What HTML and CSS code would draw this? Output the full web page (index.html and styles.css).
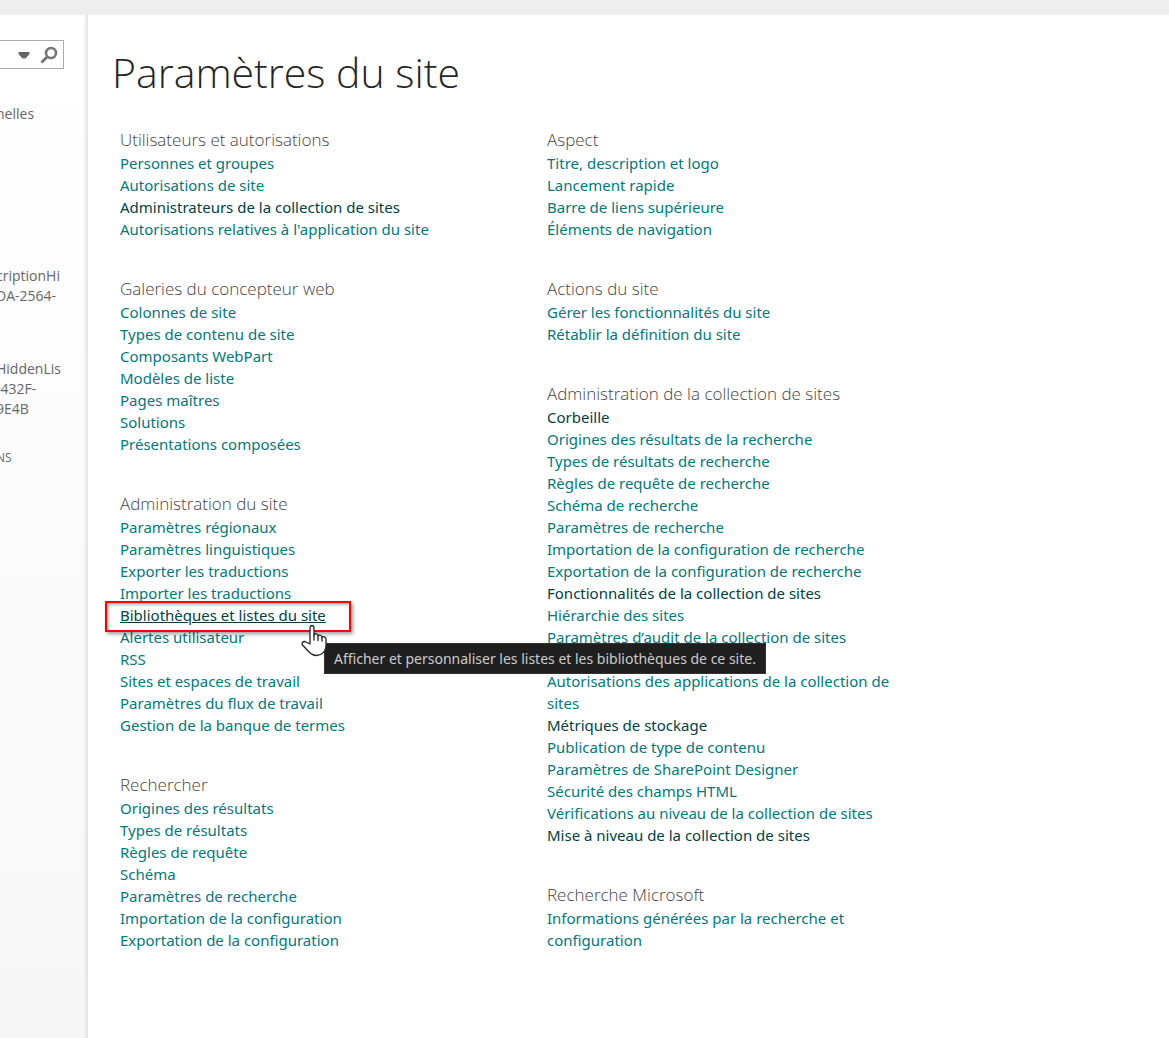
FILE: index.html
```
<!DOCTYPE html>
<html lang="fr">
<head>
  <meta charset="UTF-8">
  <meta name="viewport" content="width=device-width, initial-scale=1.0">
  <title>Paramètres du site</title>
  <link rel="stylesheet" href="styles.css">
</head>
<body>
  <header class="ribbon"></header>

  <div class="workspace">
    <!-- Left navigation -->
    <aside class="sidebar">
      <form class="search" role="search">
        <input class="search-input" type="text" aria-label="Rechercher">
        <button class="search-button" type="button" aria-label="Choisir l'étendue">
          <svg width="12" height="8" viewBox="0 0 12 8"><path d="M0.5 1h11v2L7.5 7.500h-3L0.5 3z" fill="#666"/></svg>
        </button>
        <button class="search-button" type="submit" aria-label="Lancer la recherche">
          <svg width="18" height="18" viewBox="0 0 18 18" fill="none" stroke="#777"><circle cx="11" cy="7" r="5" stroke-width="2.6"/><path d="M7.5 10.5L1.5 16.5" stroke-width="3"/></svg>
        </button>
      </form>
      <nav class="quick-launch">
        <a href="#">nelles</a>
        <a href="#" class="after-large">criptionHi<br>DA-2564-</a>
        <a href="#" class="after-medium">HiddenLis<br>-432F-<br>9E4B</a>
        <a href="#" class="edit-links">NS</a>
      </nav>
    </aside>

    <main class="content">
      <h1>Paramètres du site</h1>

      <div class="settings">
        <div class="column">
          <section>
            <h2>Utilisateurs et autorisations</h2>
            <ul>
              <li><a href="#">Personnes et groupes</a></li>
              <li><a href="#">Autorisations de site</a></li>
              <li><a href="#" class="admin">Administrateurs de la collection de sites</a></li>
              <li><a href="#">Autorisations relatives à l'application du site</a></li>
            </ul>
          </section>

          <section>
            <h2>Galeries du concepteur web</h2>
            <ul>
              <li><a href="#">Colonnes de site</a></li>
              <li><a href="#">Types de contenu de site</a></li>
              <li><a href="#">Composants WebPart</a></li>
              <li><a href="#">Modèles de liste</a></li>
              <li><a href="#">Pages maîtres</a></li>
              <li><a href="#">Solutions</a></li>
              <li><a href="#">Présentations composées</a></li>
            </ul>
          </section>

          <section>
            <h2>Administration du site</h2>
            <ul>
              <li><a href="#">Paramètres régionaux</a></li>
              <li><a href="#">Paramètres linguistiques</a></li>
              <li><a href="#">Exporter les traductions</a></li>
              <li><a href="#">Importer les traductions</a></li>
              <li class="highlighted">
                <a href="#" class="hovered" aria-describedby="tip">Bibliothèques et listes du site</a>
                <span class="frame"></span>
                <svg class="cursor" width="26" height="34" viewBox="0 0 26 34" fill="#fff" stroke="#222" stroke-width="1.3" stroke-linejoin="round" stroke-linecap="round">
                  <path d="M9 20V4.5C9 0.5 13 0.5 13 4.5V11C14 9 17 9.500 17 12C18 10.500 21 11 21 13.500C22 12 25 12.500 25 15.500V22C25 27 21 31.500 15.500 31.500C11.500 31.500 9.500 29.500 7.500 27.500L1.500 21C0 19 2.500 16.500 5 18Z"/>
                  <path d="M13 11V16M17 12V16.500M21 13.500V17" fill="none"/>
                </svg>
                <span class="tooltip" role="tooltip" id="tip">Afficher et personnaliser les listes et les bibliothèques de ce site.</span>
              </li>
              <li><a href="#">Alertes utilisateur</a></li>
              <li><a href="#">RSS</a></li>
              <li><a href="#">Sites et espaces de travail</a></li>
              <li><a href="#">Paramètres du flux de travail</a></li>
              <li><a href="#">Gestion de la banque de termes</a></li>
            </ul>
          </section>

          <section>
            <h2>Rechercher</h2>
            <ul>
              <li><a href="#">Origines des résultats</a></li>
              <li><a href="#">Types de résultats</a></li>
              <li><a href="#">Règles de requête</a></li>
              <li><a href="#">Schéma</a></li>
              <li><a href="#">Paramètres de recherche</a></li>
              <li><a href="#">Importation de la configuration</a></li>
              <li><a href="#">Exportation de la configuration</a></li>
            </ul>
          </section>
        </div>

        <div class="column">
          <section>
            <h2>Aspect</h2>
            <ul>
              <li><a href="#">Titre, description et logo</a></li>
              <li><a href="#">Lancement rapide</a></li>
              <li><a href="#">Barre de liens supérieure</a></li>
              <li><a href="#">Éléments de navigation</a></li>
            </ul>
          </section>

          <section>
            <h2>Actions du site</h2>
            <ul>
              <li><a href="#">Gérer les fonctionnalités du site</a></li>
              <li><a href="#">Rétablir la définition du site</a></li>
            </ul>
          </section>

          <section>
            <h2>Administration de la collection de sites</h2>
            <ul>
              <li><a href="#" class="admin">Corbeille</a></li>
              <li><a href="#">Origines des résultats de la recherche</a></li>
              <li><a href="#">Types de résultats de recherche</a></li>
              <li><a href="#">Règles de requête de recherche</a></li>
              <li><a href="#">Schéma de recherche</a></li>
              <li><a href="#">Paramètres de recherche</a></li>
              <li><a href="#">Importation de la configuration de recherche</a></li>
              <li><a href="#">Exportation de la configuration de recherche</a></li>
              <li><a href="#" class="admin">Fonctionnalités de la collection de sites</a></li>
              <li><a href="#">Hiérarchie des sites</a></li>
              <li><a href="#">Paramètres d’audit de la collection de sites</a></li>
              <li></li>
              <li><a href="#">Autorisations des applications de la collection de sites</a></li>
              <li><a href="#" class="admin">Métriques de stockage</a></li>
              <li><a href="#">Publication de type de contenu</a></li>
              <li><a href="#">Paramètres de SharePoint Designer</a></li>
              <li><a href="#">Sécurité des champs HTML</a></li>
              <li><a href="#">Vérifications au niveau de la collection de sites</a></li>
              <li><a href="#" class="admin">Mise à niveau de la collection de sites</a></li>
            </ul>
          </section>

          <section>
            <h2>Recherche Microsoft</h2>
            <ul>
              <li><a href="#">Informations générées par la recherche et configuration</a></li>
            </ul>
          </section>
        </div>
      </div>
    </main>
  </div>
</body>
</html>
```

FILE: styles.css
```
* {
  box-sizing: border-box;
}

body {
  margin: 0;
  min-height: 100vh;
  display: flex;
  flex-direction: column;
  font-family: "Noto Sans", "Open Sans", sans-serif;
  font-size: 15px;
  line-height: 22px;
  color: #444;
  background: #fff;
}

a {
  color: #03787c;
  text-decoration: none;
}

.ribbon {
  height: 15px;
  background: #eee;
}

.workspace {
  flex: 1;
  display: flex;
}

/* Left navigation */
.sidebar {
  flex: none;
  width: 88px;
  padding-top: 25px;
  overflow: hidden;
  background:
    linear-gradient(to right, transparent 83px, #e2e2e2 88px),
    linear-gradient(#fff, #f7f7f7);
}

.search {
  display: flex;
  align-items: center;
  width: 64px;
  height: 29px;
  border: 1px solid #ababab;
  border-left: 0;
  background: #fff;
}

.search-input {
  flex: 1;
  min-width: 0;
  height: 100%;
  padding: 0;
  border: 0;
  background: none;
}

.search-button {
  display: flex;
  padding: 0 5px;
  border: 0;
  background: none;
}

.quick-launch {
  display: flex;
  flex-direction: column;
  margin: 35px 0 0 -4px;
  font-family: "Open Sans", "Noto Sans", sans-serif;
  font-size: 14px;
  line-height: 20px;
}

.quick-launch a {
  color: #666;
}

.quick-launch .after-large {
  margin-top: 142px;
}

.quick-launch .after-medium {
  margin-top: 53px;
}

.quick-launch .edit-links {
  margin-top: 29px;
  font-size: 12px;
}

/* Settings page */
.content {
  flex: 1;
  padding: 27px 24px;
}

h1,
h2 {
  font-family: "Open Sans", "Noto Sans", sans-serif;
  font-weight: 300;
}

h1 {
  margin: 0 0 25px;
  font-size: 41px;
  line-height: 60px;
  color: #262626;
}

.settings {
  display: grid;
  grid-template-columns: minmax(0, 371px) minmax(0, 371px);
  gap: 56px;
  padding-left: 8px;
}

.column {
  display: flex;
  flex-direction: column;
  gap: 36px;
}

h2 {
  margin: 0;
  font-size: 17px;
  line-height: 25px;
  color: #444;
}

ul {
  margin: 0;
  padding: 0;
  list-style: none;
}

li {
  min-height: 22px;
}

.admin,
.hovered {
  color: #004144;
}

.hovered {
  text-decoration: underline;
}

/* Hovered link with its frame, pointer and tooltip */
.highlighted {
  position: relative;
}

.frame {
  position: absolute;
  top: -3px;
  left: -15px;
  width: 246px;
  height: 31px;
  border: 2px solid #f00;
  box-shadow: 2px 2px 4px rgba(0, 0, 0, 0.4), inset 2px 2px 3px rgba(0, 0, 0, 0.3);
  pointer-events: none;
}

.cursor {
  position: absolute;
  top: 20px;
  left: 181px;
  z-index: 2;
}

.tooltip {
  position: absolute;
  top: 39px;
  left: 204px;
  z-index: 1;
  padding: 4px 9px;
  border: 1px solid #333;
  background: #1f1f1f;
  color: #ccc;
  font-size: 14px;
  line-height: 21px;
  white-space: nowrap;
}
```
